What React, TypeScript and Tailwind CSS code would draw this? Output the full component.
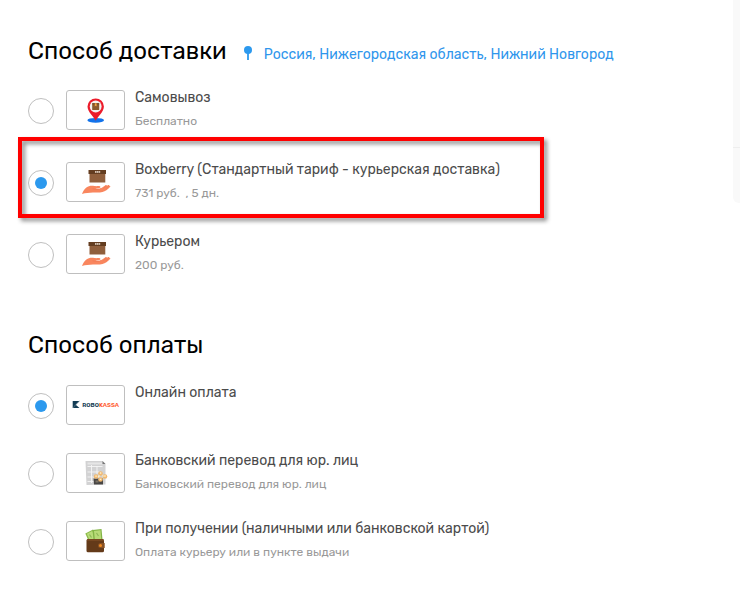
import { useState, type ReactNode } from 'react';

interface Option {
  id: string;
  title: string;
  note?: string;
  logo: ReactNode;
  highlighted?: boolean;
}

interface OptionGroupProps {
  name: string;
  options: Option[];
  initial: string;
}

function PickupLogo() {
  return (
    <svg viewBox="0 0 57 38" className="h-full w-full" aria-hidden="true">
      <ellipse cx="28.7" cy="29.3" rx="8.3" ry="2.4" fill="#1273eb" />
      <path d="M28.7 29.8c-1.6-3.6-8.2-8.6-8.2-14.2a8.2 8.2 0 0 1 16.4 0c0 5.6-6.6 10.6-8.2 14.2z" fill="#ec1c2b" />
      <circle cx="28.7" cy="15.5" r="5.9" fill="#f4f2f0" />
      <rect x="25.2" y="12.3" width="7" height="6.7" rx=".5" fill="#8a5a2e" />
      <path d="M25.2 12.3h7v1h-7z" fill="#69401c" />
      <path d="M27.8 12.3h1.8v3.2l-.9-.7-.9.7z" fill="#f2a445" />
    </svg>
  );
}

function CourierLogo() {
  return (
    <svg viewBox="0 0 57 38" className="h-full w-full" aria-hidden="true">
      <path d="M22.5 10h15.8v9.5H22.5z" fill="#905f3c" />
      <path d="M21.5 7h17.5v4H21.5z" fill="#643d20" />
      <path d="M28 8.2h5.2v1.5H28z" fill="#f2e5d8" />
      <path d="M29.3 8.2h.5v1.5h-.5zM31.3 8.2h.5v1.5h-.5z" fill="#643d20" />
      <path
        d="M15 31c1.1-2.6 2.4-5 4.4-6.5 2.4-1.9 5.3-2 8-1.5 2 .4 4-.2 5.5.2 1 .4.7 1.4-.4 1.7l-4 .7c2.2.4 4.3.3 6-.7l3.6-2.5c1.200-.7 2-.2 1.500.5l1.600-.8c1-.3 1.600.200 1 .9l.500-.1c.7 0 .8.500.3 1-2.300 2.500-4.700 4.300-7.500 5.100-3.200.9-6.300.4-9.500.6-4 .2-7.500.5-11 1.400z"
        fill="#f9865e"
      />
      <path d="M25.5 25.8c3 .9 6.5.8 8.8-.6M36.5 25.5l3-2.6M38.5 26l3-2.6" fill="none" stroke="#ea7450" strokeWidth=".5" />
    </svg>
  );
}

function RobokassaLogo() {
  return (
    <svg viewBox="0 0 57 38" className="h-full w-full" role="img" aria-label="Robokassa">
      <path d="M5.7 15h6.8l-3.8 3.7 3.8 3.3H5.7z" fill="#123b54" />
      <path d="M8.7 18.7l3.8-3.7M6 22l2.7-3.3" stroke="#6f8999" strokeWidth=".6" />
      <text x="15.3" y="20.5" fontSize="6" fontWeight="600" fill="#123b54">
        ROBO<tspan fill="#ff5a2c">KASSA</tspan>
      </text>
    </svg>
  );
}

function InvoiceLogo() {
  return (
    <svg viewBox="0 0 57 38" className="h-full w-full" aria-hidden="true">
      <path d="M18.5 7h17l3 3v20.5l-19 .5z" fill="#d2d2d3" />
      <path d="M20.5 8.5h15v2h-15z" fill="#e6e6e6" />
      <path d="M35.5 7l3 3h-3z" fill="#777" />
      <path d="M20.5 12.5h15M20.5 18h12M20.5 23h7M20.5 27.5h7M24.5 11v18M30 12v8" stroke="#f5f5f5" strokeWidth=".9" />
      <path d="M26.5 24.5H36v6h-9z" fill="#484644" />
      <path d="M28.5 26.5h3v2h-3z" fill="#7b7265" />
      <circle cx="29" cy="22.5" r="2.3" fill="#f1b970" />
      <circle cx="33.5" cy="19.5" r="2.3" fill="#f1b970" />
      <circle cx="38" cy="22.5" r="2.3" fill="#f1b970" />
      <circle cx="33.5" cy="25.5" r="2.3" fill="#f1b970" />
      <path
        d="M28.3 22.2h1.5M32.8 19h1.5M37.2 22h1.5M32.8 25.3h1.5M31 23l1.5-1.5M35.5 21.5l1 1"
        stroke="#fff0c9"
        strokeWidth="1.3"
      />
    </svg>
  );
}

function WalletLogo() {
  return (
    <svg viewBox="0 0 57 38" className="h-full w-full" aria-hidden="true">
      <path d="M18.3 11.5l7.7-4 4.5 10H21z" fill="#8cbb4b" />
      <path d="M19.8 11.8l5.5-2.8 3.5 8h-6.600z" fill="#b9dc79" />
      <path d="M25.5 8l9-1 1 10.5h-9z" fill="#83b447" />
      <path d="M27 9l6.5-.7.7 8.7h-6.400z" fill="#b7da76" />
      <path d="M22.5 12.5l2 3M29.5 11l2 3" stroke="#8db655" strokeWidth="1.2" />
      <rect x="19.5" y="17" width="17.5" height="13.3" rx="1.5" fill="#643a19" />
      <path d="M20 17.2h16.5v1.600H20z" fill="#7b4b23" />
      <path d="M33.5 21h4.200v5h-4.200a2.500 2.500 0 0 1 0-5z" fill="#875225" />
      <circle cx="33.5" cy="23.5" r="1.5" fill="#f18a20" />
    </svg>
  );
}

const deliveryOptions: Option[] = [
  { id: 'pickup', title: 'Самовывоз', note: 'Бесплатно', logo: <PickupLogo /> },
  {
    id: 'boxberry',
    title: 'Boxberry (Стандартный тариф - курьерская доставка)',
    note: '731 руб. \u00a0, 5 дн.',
    logo: <CourierLogo />,
    highlighted: true,
  },
  { id: 'courier', title: 'Курьером', note: '200 руб.', logo: <CourierLogo /> },
];

const paymentOptions: Option[] = [
  { id: 'online', title: 'Онлайн оплата', logo: <RobokassaLogo /> },
  { id: 'bank', title: 'Банковский перевод для юр. лиц', note: 'Банковский перевод для юр. лиц', logo: <InvoiceLogo /> },
  {
    id: 'cash',
    title: 'При получении (наличными или банковской картой)',
    note: 'Оплата курьеру или в пункте выдачи',
    logo: <WalletLogo />,
  },
];

function OptionGroup({ name, options, initial }: OptionGroupProps) {
  const [selected, setSelected] = useState(initial);

  return (
    <>
      {options.map(option => (
        <div key={option.id} className="relative">
          <label htmlFor={option.id} className="flex min-h-11 cursor-pointer items-start">
            <input
              type="radio"
              id={option.id}
              name={name}
              checked={selected === option.id}
              onChange={() => setSelected(option.id)}
              className="mt-[11px] grid size-[26px] shrink-0 appearance-none place-content-center rounded-full border border-[#bfbfbf] bg-white before:size-3 before:rounded-full checked:before:bg-[#2c99ee]"
            />
            <span className="mt-[3px] ml-3 h-10 w-[59px] shrink-0 rounded-[3px] border border-[#bfbfbf] bg-white">
              {option.logo}
            </span>
            <span className="ml-[10px] flex flex-col gap-[2px]">
              <span className="text-sm leading-[22px] text-[#4b4b4b]">{option.title}</span>
              {option.note && <span className="text-xs leading-5 text-[#999]">{option.note}</span>}
            </span>
          </label>
          {option.highlighted && (
            <div className="pointer-events-none absolute -top-[22px] -bottom-[15px] -left-[10px] w-[526px] border-4 border-[#ff0000] drop-shadow-[3px_3px_2px_rgba(0,0,0,0.45)]" />
          )}
        </div>
      ))}
    </>
  );
}

export default function App() {
  return (
    <div className="flex min-h-screen items-start bg-white font-['Rubik','Roboto','Liberation_Sans',sans-serif]">
      <main className="min-w-0 flex-1 px-7 pt-[35px]">
        <section>
          <div className="flex items-center">
            <h2 className="text-2xl leading-8 text-black">Способ доставки</h2>
            <a href="#city" className="ml-4 flex items-center gap-[11px] pt-2 text-sm leading-5 text-[#2f96ec]">
              <svg viewBox="0 0 10 15" className="mb-1 h-[15px] w-[10px]" aria-hidden="true">
                <circle cx="5" cy="4" r="4" fill="#2c99ee" />
                <path d="M4.1 7h1.8v7H4.1z" fill="#2c99ee" />
              </svg>
              Россия, Нижегородская область, Нижний Новгород
            </a>
          </div>
          <div className="mt-5 flex flex-col gap-7">
            <OptionGroup name="delivery" options={deliveryOptions} initial="boxberry" />
          </div>
        </section>

        <section className="mt-[54px]">
          <h2 className="text-2xl leading-8 text-black">Способ оплаты</h2>
          <div className="mt-[21px] flex flex-col gap-6">
            <OptionGroup name="payment" options={paymentOptions} initial="online" />
          </div>
        </section>
      </main>

      <aside className="w-[7px] shrink-0 overflow-hidden rounded-bl-md bg-[#f9f9f9]">
        <div className="h-[148px] border-b border-[#eee]" />
        <div className="h-[55px]" />
      </aside>
    </div>
  );
}
